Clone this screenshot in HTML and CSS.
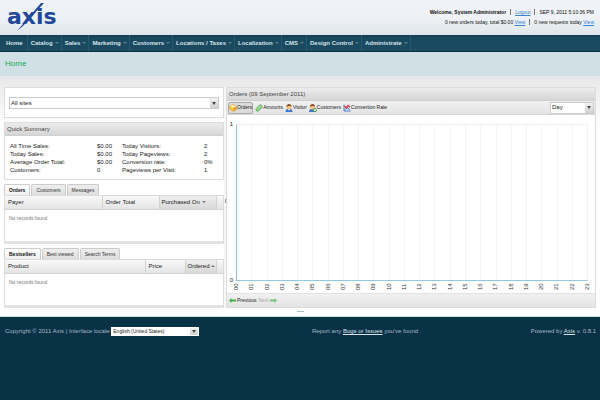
FILE: index.html
```html
<!DOCTYPE html>
<html lang="en">
<head>
<meta charset="utf-8">
<title>Axis - Home</title>
<link rel="stylesheet" href="styles.css">
</head>
<body>
<header class="top">
  <a class="logo" href="#" aria-label="Axis">
    <svg width="56" height="34" viewBox="0 0 56 34">
      <text class="logo-text" x="0" y="24">axis</text>
      <path class="logo-slash" d="M10 31 34 3h3L16 26Z"/>
    </svg>
  </a>
  <div class="account">
    <p><strong>Welcome, System Administrator</strong><i class="bar"></i><a href="#">Logout</a><i class="bar"></i>SEP 9, 2011 5:10:36 PM</p>
    <p>0 new orders today, total $0.00 <a href="#">View</a><i class="bar"></i>0 new requests today <a href="#">View</a></p>
  </div>
</header>
<nav class="menu">
  <a class="plain" href="#">Home</a>
  <a href="#">Catalog</a>
  <a href="#">Sales</a>
  <a href="#">Marketing</a>
  <a href="#">Customers</a>
  <a href="#">Locations / Taxes</a>
  <a href="#">Localization</a>
  <a href="#">CMS</a>
  <a href="#">Design Control</a>
  <a href="#">Administrate</a>
</nav>
<h1 class="title">Home</h1>
<main class="content">
  <div class="left">
    <section class="panel site-box">
      <div class="combo">
        <select aria-label="Site"><option>All sites</option></select>
        <span class="trigger"></span>
      </div>
    </section>
    <section class="panel summary">
      <h2 class="panel-head">Quick Summary</h2>
      <table>
        <tr><td>All Time Sales:</td><td>$0.00</td><td>Today Visitors:</td><td>2</td></tr>
        <tr><td>Today Sales:</td><td>$0.00</td><td>Today Pageviews:</td><td>2</td></tr>
        <tr><td>Average Order Total:</td><td>$0.00</td><td>Conversion rate:</td><td>0%</td></tr>
        <tr><td>Customers:</td><td>0</td><td>Pageviews per Visit:</td><td>1</td></tr>
      </table>
    </section>
    <section class="tabbed">
      <div class="tabs">
        <button class="active" type="button">Orders</button>
        <button type="button">Customers</button>
        <button type="button">Messages</button>
      </div>
      <div class="panel list">
        <table>
          <thead><tr><th class="w-payer">Payer</th><th class="w-total">Order Total</th><th class="w-date sorted">Purchased On <i class="sort down"></i></th><th></th></tr></thead>
          <tbody><tr><td colspan="4">No records found</td></tr></tbody>
        </table>
      </div>
    </section>
    <section class="tabbed">
      <div class="tabs">
        <button class="active" type="button">Bestsellers</button>
        <button type="button">Best viewed</button>
        <button type="button">Search Terms</button>
      </div>
      <div class="panel list">
        <table>
          <thead><tr><th class="w-product">Product</th><th class="w-price">Price</th><th class="w-ordered sorted">Ordered <i class="sort up"></i></th><th></th></tr></thead>
          <tbody><tr><td colspan="4">No records found</td></tr></tbody>
        </table>
      </div>
    </section>
  </div>
  <div class="splitter"><i></i></div>
  <section class="panel right">
    <h2 class="panel-head">Orders (09 September 2011)</h2>
    <div class="toolbar">
      <button class="pressed" type="button"><svg class="icon" viewBox="0 0 16 16"><path fill="#f6c34a" stroke="#d99a2b" d="M1 4 8 1l7 4v7l-6 3-7-4Z"/><path fill="#fff0b8" d="m2 4 6-2 6 3-5 3Z"/><path fill="#e59a28" d="m9 8 5-3v6l-5 3Z"/></svg>Orders</button>
      <button type="button"><svg class="icon" viewBox="0 0 16 16"><path fill="#7cc877" stroke="#4a9c50" d="M2 9 10 1l4 2v4l-8 8-4-2Z"/><path fill="none" stroke="#c5e9bd" stroke-width="2" d="m4 11 8-8"/></svg>Amounts</button>
      <button type="button"><svg class="icon" viewBox="0 0 16 16"><path fill="#3f78c9" d="M1 16c0-5 3-7 7-7s7 2 7 7Z"/><path fill="#fff" d="m6 10 2 4 2-4Z"/><circle cx="8" cy="6" r="5" fill="#f2bf8b"/><path fill="#8a4a20" d="M3 6c-1-8 11-8 10 0L11 4H6Z"/></svg>Visitor</button>
      <button type="button"><svg class="icon" viewBox="0 0 16 16"><path fill="#3f78c9" d="M0 16c0-5 3-7 7-7s7 2 7 7Z"/><circle cx="7" cy="6" r="5" fill="#f2bf8b"/><path fill="#8a4a20" d="M2 6c-1-8 11-8 10 0l-2-2H5Z"/><circle cx="12" cy="12" r="4" fill="#4faa4a"/><path stroke="#fff" stroke-width="2" d="M12 10v4M10 12h4"/></svg>Customers</button>
      <button type="button"><svg class="icon" viewBox="0 0 16 16"><path fill="#dfe9f8" d="M2 1h13v13H2Z"/><path fill="none" stroke="#4a7fd0" stroke-width="2" d="M2 1v13h13M3 12l5-5 6 5"/><path fill="none" stroke="#e0443c" stroke-width="3" d="m3 4 4 4 3-5 4 3"/></svg>Convertion Rate</button>
      <div class="combo period">
        <select aria-label="Period"><option>Day</option></select>
        <span class="trigger"></span>
      </div>
    </div>
    <div class="chart">
      <div class="y-axis"><span>1</span><span>0</span></div>
      <div class="plot"><i></i><i></i><i></i><i></i><i></i><i></i><i></i><i></i><i></i><i></i><i></i><i></i><i></i><i></i><i></i><i></i><i></i><i></i><i></i><i></i><i></i><i></i><i></i></div>
      <div class="x-axis"><span>00</span><span>01</span><span>02</span><span>03</span><span>04</span><span>05</span><span>06</span><span>07</span><span>08</span><span>09</span><span>10</span><span>11</span><span>12</span><span>13</span><span>14</span><span>15</span><span>16</span><span>17</span><span>18</span><span>19</span><span>20</span><span>21</span><span>22</span><span>23</span></div>
    </div>
    <div class="toolbar pager">
      <button type="button"><svg class="arrow" viewBox="0 0 14 10"><path d="M0 5 5 0v3h9v4H5v3Z"/></svg>Previous</button>
      <button type="button" disabled>Next<svg class="arrow" viewBox="0 0 14 10"><path d="M14 5 9 0v3H0v4h9v3Z"/></svg></button>
    </div>
  </section>
</main>
<div class="grip"><i></i></div>
<footer class="foot">
  <div class="locale"><label for="locale">Copyright © 2011 Axis | Interface locale:</label>
    <div class="combo lang">
      <select id="locale"><option>English (United States)</option></select>
      <span class="trigger"></span>
    </div>
  </div>
  <p>Report any <a href="#">Bugs or Issues</a> you've found</p>
  <p>Powered by <a href="#">Axis</a> v. 0.8.1</p>
</footer>
</body>
</html>
```
FILE: styles.css
```css
* { box-sizing: border-box; }
body {
  margin: 0;
  min-height: 100vh;
  display: flex;
  flex-direction: column;
  background: #fff;
  color: #222;
  font: 6px/9px "Liberation Sans", Arial, sans-serif;
}
p, h1, h2 { margin: 0; font-weight: normal; }
button, select { font: inherit; color: inherit; border: 0; margin: 0; padding: 0; background: none; border-radius: 0; }
table { border-collapse: collapse; width: 100%; }
td, th { padding: 0; text-align: left; font-weight: normal; }

.top {
  display: flex;
  justify-content: space-between;
  height: 35px;
  padding: 0 6px 0 7px;
  background: linear-gradient(#eff3f9, #eef2f7 50%, #e0e6ea);
}
.logo svg { display: block; }
.logo-text { font: bold 22px "DejaVu Sans", sans-serif; fill: #22489a; }
.logo-slash { fill: #22489a; }
.account { padding-top: 8px; text-align: right; color: #111; font-size: 5px; }
.account p { height: 10px; }
.account a { color: #3a80d8; }
.bar { display: inline-block; width: 1px; height: 6px; margin: 0 4px; background: #777; vertical-align: -1px; }

.menu {
  display: flex;
  height: 17px;
  padding-left: 2px;
  background: linear-gradient(#143d51, #1a495f 25%, #1b4b61);
  border-bottom: 1px solid #0e3347;
  box-shadow: 0 1px #93b4be;
  font-weight: bold;
  line-height: 17px;
}
.menu a { padding: 0 2px 0 3px; color: #d5e2e8; text-decoration: none; border-right: 1px solid #265970; }
.menu a::after { content: ""; display: inline-block; margin-left: 2px; border: 2px solid transparent; border-top-color: #547f92; border-bottom: 0; vertical-align: 1px; }
.menu .plain { padding: 0 4px; }
.menu .plain::after { display: none; }

.title {
  height: 25px;
  padding: 0 5px;
  background: #d1e0e4;
  border-bottom: 1px solid #e3e9ea;
  color: #12ab53;
  font-size: 8px;
  line-height: 24px;
}

.content {
  display: grid;
  grid-template-columns: 220fr 2px 370fr;
  padding: 10px 4px 0;
  background: linear-gradient(#e8e8e8, #fff 50px);
}
.panel { background: #fff; border: 1px solid #dcdcdc; }
.panel-head {
  height: 13px;
  padding: 0 2px;
  background: linear-gradient(#ececec, #d6d6d6);
  border-bottom: 1px solid #d0d0d0;
  font-size: 6px;
  line-height: 13px;
  color: #444;
}
.left { display: flex; flex-direction: column; }
.site-box { height: 31px; padding: 9px 4px; margin-bottom: 4px; }
.combo { display: flex; height: 12px; background: #fff; border: 1px solid #c6ccd2; }
.combo select { flex: 1; min-width: 0; appearance: none; padding-left: 1px; color: #222; }
.trigger { display: flex; align-items: center; justify-content: center; width: 8px; background: linear-gradient(#f2f2f2, #cfcfcf); }
.trigger::after { content: ""; border: 2px solid transparent; border-top: 3px solid #444; border-bottom: 0; }

.summary { height: 58px; margin-bottom: 5px; }
.summary table { margin: 6px 5px 0; width: 96%; line-height: 8px; table-layout: fixed; }
.summary td { height: 8px; padding: 0; }
.summary td:nth-child(1) { width: 87px; }
.summary td:nth-child(2) { width: 25px; }
.summary td:nth-child(3) { width: 82px; }

.tabbed { margin-bottom: 5px; }
.tabbed:last-child { margin-bottom: 0; }
.tabs { display: flex; gap: 1px; height: 11px; margin-top: -1px; font-size: 5px; }
.tabs button { padding: 0 4px; background: linear-gradient(#eee, #dedede); border: 1px solid #ccc; border-bottom: 0; border-radius: 2px 2px 0 0; color: #333; line-height: 10px; }
.tabs .active { background: linear-gradient(#fff, #f0f0f0); font-weight: bold; color: #111; }
.list { height: 49px; border-bottom: 3px solid #e2e2e2; }
.list table { table-layout: fixed; }
.list th { height: 13px; padding-left: 3px; background: linear-gradient(#f8f8f8, #e4e4e4); border-right: 1px solid #d2d2d2; border-bottom: 1px solid #d2d2d2; white-space: nowrap; }
.list th:last-child { border-right: 0; }
.list .sorted { padding-left: 2px; background: linear-gradient(#eee, #d8d8d8); border-left: 1px solid #bbb; }
.list td { padding: 4px; color: #777; font-size: 5px; }
.w-payer { width: 97px; }
.w-total { width: 57px; }
.w-date { width: 57px; }
.w-product { width: 140px; }
.w-price { width: 40px; }
.w-ordered { width: 31px; }
.sort { display: inline-block; border: 2px solid transparent; vertical-align: 1px; }
.sort.down { border-top-color: #777; border-bottom: 0; }
.sort.up { border-bottom-color: #777; border-top: 0; }

.splitter { padding-top: 112px; background: #f7f7f7; }
.splitter i { display: block; width: 1px; height: 4px; margin-left: 1px; background: #999; }

.right { display: flex; flex-direction: column; }
.toolbar { display: flex; align-items: center; height: 14px; padding: 0 1px; background: linear-gradient(#f0f0f0, #e4e4e4); border-bottom: 1px solid #d8d8d8; color: #222; font-size: 5px; }
.toolbar button { display: flex; align-items: center; height: 12px; margin-right: 2px; }
.toolbar .pressed { background: #dcdcdc; border: 1px solid #aaa; border-radius: 2px; }
.icon { width: 8px; height: 8px; }
.period { width: 44px; margin-left: auto; font-size: 6px; }
.chart {
  flex: 1;
  display: grid;
  grid-template-columns: 9px 1fr 7px;
  grid-template-rows: 157px auto;
  padding-top: 9px;
}
.y-axis { display: flex; flex-direction: column; justify-content: space-between; align-items: center; margin: -4px 0; }
.plot { display: flex; border: 1px solid #eef1f7; border-left-color: #8fbfe0; border-bottom-color: #8ecbe0; }
.plot i { flex: 1; border-right: 1px solid #f3f4f8; }
.plot i:last-child { border-right: 0; }
.x-axis { grid-column: 1 / -1; display: flex; padding: 2px 0 0 2px; }
.x-axis span { flex: 1; height: 7px; display: flex; align-items: center; writing-mode: vertical-rl; transform: rotate(180deg); line-height: 15px; text-align: right; color: #333; }
.pager { border-top: 1px solid #e2e2e2; border-bottom: 0; }
.pager button:disabled { color: #aaa; }
.arrow { width: 7px; height: 5px; margin: 0 1px; fill: #43b04e; }
button:disabled .arrow { fill: #79c481; }

.grip { display: flex; justify-content: center; height: 8px; padding-top: 3px; }
.grip i { width: 7px; height: 1px; background: #a9bfd8; }

.foot {
  flex: 1;
  display: flex;
  justify-content: space-between;
  align-items: flex-start;
  padding: 10px 4px 0 5px;
  border-top: 1px solid #cfe0e3;
  background: #0a3247;
  color: #a3b8c3;
}
.foot a { color: #d8e4ea; }
.locale { display: flex; white-space: nowrap; }
.lang { width: 88px; height: 9px; border: 1px solid #fff; font-size: 5px; }
.lang select { line-height: 7px; }
```
